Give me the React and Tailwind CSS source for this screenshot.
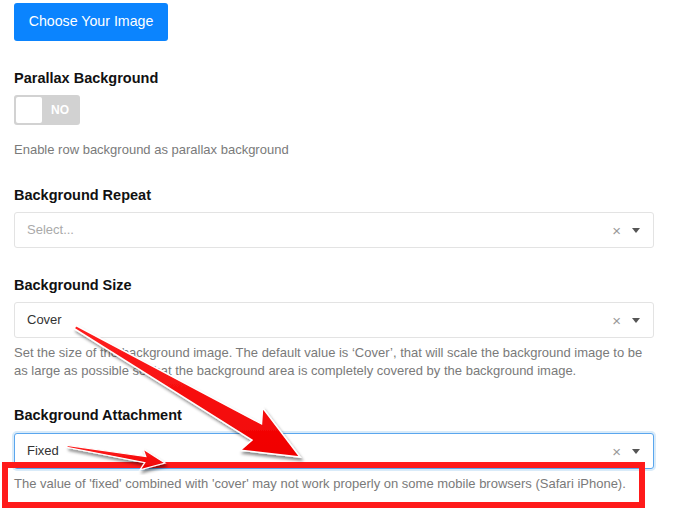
import React from 'react';

function Caret() {
    return (
        <svg width="8" height="5" viewBox="0 0 8 5" className="ml-[11px]">
            <path d="M0 0 L8 0 L4 5 Z" fill="#555" />
        </svg>
    );
}

function SelectBox({ value, placeholder, focused }) {
    return (
        <div
            className={
                'flex items-center h-[36px] w-[640px] rounded-[3px] bg-white pl-[12px] pr-[13px] ' +
                (focused
                    ? 'border border-[#5aa6ee] shadow-[0_0_0_2px_rgba(102,175,233,0.25)]'
                    : 'border border-[#e3e3e3]')
            }
        >
            <span className={'flex-1 text-[13px] ' + (value ? 'text-[#333]' : 'text-[#aaa]')}>
                {value || placeholder}
            </span>
            <span className="text-[15px] leading-none text-[#999]">×</span>
            <Caret />
        </div>
    );
}

function Label({ children, className = '' }) {
    return <h3 className={'text-[14.5px] font-bold text-[#111] leading-[18px] ' + className}>{children}</h3>;
}

function Help({ children, className = '' }) {
    return <p className={'text-[13px] leading-[18px] text-[#7a7a7a] ' + className}>{children}</p>;
}

function Annotations() {
    return (
        <>
            <div className="absolute left-[2px] top-[462px] w-[643px] h-[46px] border-[6px] border-[#ff1a1a] pointer-events-none" />
            <svg className="absolute left-0 top-0 pointer-events-none" width="680" height="518" viewBox="0 0 680 518">
                <defs>
                    <filter id="sh" x="-20%" y="-20%" width="140%" height="140%">
                        <feDropShadow dx="2" dy="3" stdDeviation="1.8" floodColor="#000" floodOpacity="0.45" />
                    </filter>
                    <linearGradient id="rg" x1="0" y1="0" x2="0" y2="1">
                        <stop offset="0" stopColor="#ff2020" />
                        <stop offset="1" stopColor="#f00000" />
                    </linearGradient>
                </defs>
                <polygon
                    points="76,325.5 261.5,423.8 262.6,407.7 300,457 240.4,450.3 252,440.2 74,328.5"
                    fill="url(#rg)"
                    stroke="#fff"
                    strokeWidth="1.5"
                    strokeLinejoin="miter"
                    filter="url(#sh)"
                />
                <polygon
                    points="67,445.3 145.8,456.6 143.1,449 165,463 140,469.8 144.8,462.6 67,447.3"
                    fill="url(#rg)"
                    stroke="#fff"
                    strokeWidth="1.2"
                    filter="url(#sh)"
                />
            </svg>
        </>
    );
}

export default function App() {
    return (
        <div className="relative w-[680px] h-[518px] overflow-hidden bg-white font-['Liberation_Sans',Arial,sans-serif]">
            <div className="flex flex-col items-start pl-[14px] pt-[3px]">
                <button className="h-[38px] w-[154px] rounded-[3px] bg-[#0b84fe] text-white text-[14.2px]">
                    Choose Your Image
                </button>

                <Label className="mt-[28px]">Parallax Background</Label>
                <div className="mt-[8px] flex items-center w-[66px] h-[30px] rounded-[3px] bg-[#d2d2d2] p-[2px]">
                    <div className="w-[26px] h-[26px] rounded-[2px] bg-white" />
                    <span className="flex-1 text-center text-[12px] font-bold text-white">NO</span>
                </div>
                <Help className="mt-[16px]">Enable row background as parallax background</Help>

                <Label className="mt-[27px]">Background Repeat</Label>
                <div className="mt-[8px]">
                    <SelectBox placeholder="Select..." />
                </div>

                <Label className="mt-[28px]">Background Size</Label>
                <div className="mt-[8px]">
                    <SelectBox value="Cover" />
                </div>
                <Help className="mt-[6px] w-[645px]">
                    Set the size of the background image. The default value is ‘Cover’, that will scale the background image to be as large as possible so that the background area is completely covered by the background image.
                </Help>

                <Label className="mt-[26px]">Background Attachment</Label>
                <div className="mt-[9px]">
                    <SelectBox value="Fixed" focused />
                </div>
                <Help className="mt-[6px]">
                    The value of 'fixed' combined with 'cover' may not work properly on some mobile browsers (Safari iPhone).
                </Help>
            </div>
            <Annotations />
        </div>
    );
}
